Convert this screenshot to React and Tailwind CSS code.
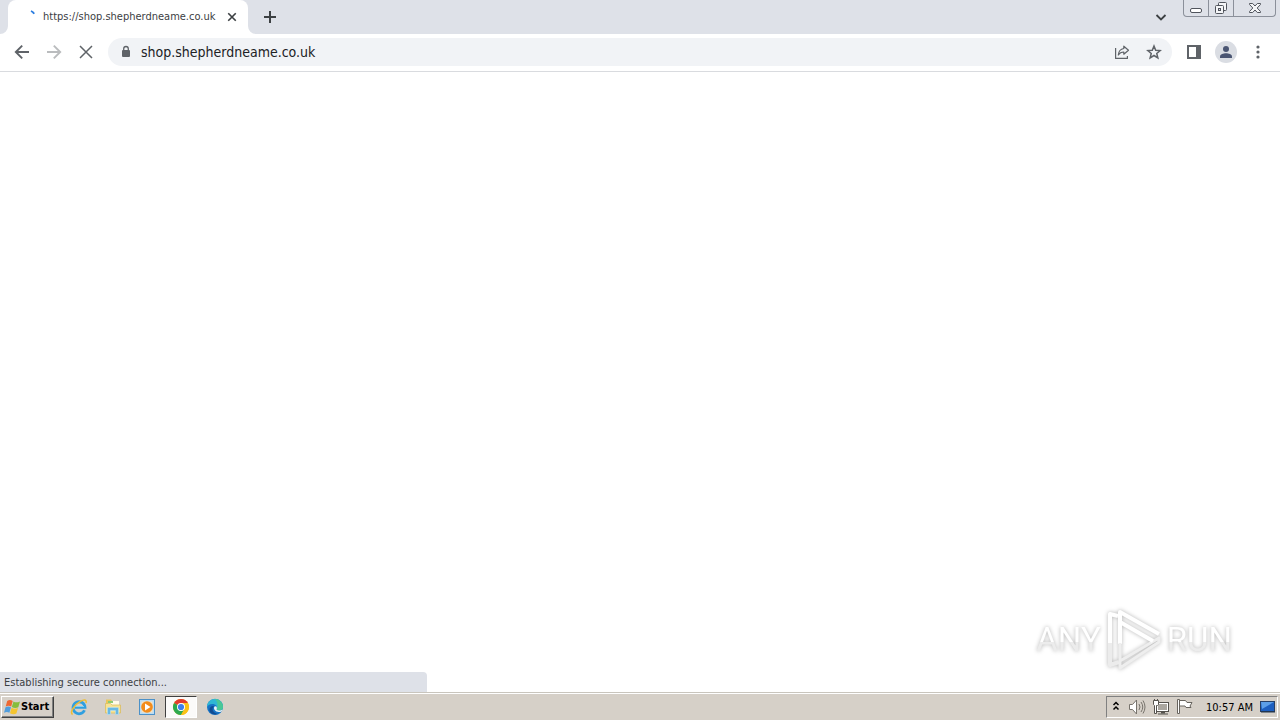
import { useState } from "react";

const UI_FONT = "font-['DejaVu_Sans_Condensed','DejaVu_Sans',sans-serif]";

function Spinner() {
  return (
    <svg width="16" height="16" viewBox="0 0 16 16" fill="none" aria-hidden="true">
      <path d="M6 2a7 7 0 0 1 3.200 2.800" stroke="#2b7de0" strokeWidth="1.900" />
    </svg>
  );
}

function CloseIcon({ size = 16, strokeWidth = 1.5 }) {
  return (
    <svg width={size} height={size} viewBox="0 0 16 16" fill="none" stroke="currentColor" strokeWidth={strokeWidth} aria-hidden="true">
      <path d="M2 2l12 12M14 2L2 14" />
    </svg>
  );
}

function ArrowIcon({ flip }) {
  return (
    <svg className={flip ? "rotate-180" : ""} width="16" height="16" viewBox="0 0 16 16" fill="none" stroke="currentColor" strokeWidth="1.9" aria-hidden="true">
      <path d="M15 8H2M8.2 1.6L1.8 8l6.4 6.4" />
    </svg>
  );
}

function WindowButtons() {
  return (
    <div className="mr-1 flex h-[17px] overflow-hidden rounded-b border border-t-0 border-[#8b909a] text-[#50545c]">
      <button aria-label="Minimize" className="flex w-[25px] items-center justify-center border-r border-[#8b909a]">
        <svg width="14" height="16" viewBox="0 0 14 16" fill="#fff" stroke="currentColor" aria-hidden="true">
          <rect x="1.5" y="8.5" width="11" height="4" rx="1.5" />
        </svg>
      </button>
      <button aria-label="Restore" className="flex w-[25px] items-center justify-center border-r border-[#8b909a]">
        <svg width="14" height="16" viewBox="0 0 14 16" fill="#f4f5f7" stroke="currentColor" aria-hidden="true">
          <rect x="4.5" y="2.5" width="8" height="8" rx="1" />
          <rect x="1.5" y="5.5" width="8" height="8" rx="1" />
          <rect x="4.5" y="8.5" width="2" height="2" fill="#dee1e8" />
        </svg>
      </button>
      <button aria-label="Close window" className="flex w-[41px] items-center justify-center">
        <svg width="14" height="14" viewBox="0 0 14 14" aria-hidden="true">
          <path d="M1.5 2.5h3.2L7 5l2.3-2.5h3.2v1L9.2 7l3.3 3.5v1H9.3L7 9l-2.3 2.5H1.5v-1L4.8 7 1.5 3.5z" fill="#f4f5f7" stroke="currentColor" />
        </svg>
      </button>
    </div>
  );
}

function TabStrip() {
  return (
    <header className="flex h-[34px] items-start bg-[#dee1e8] pl-2">
      <div className="relative flex h-[34px] w-60 items-center rounded-t-lg bg-white pl-[17px] pr-2 text-[#3c4043]">
        <svg className="absolute bottom-0 -left-2" width="8" height="8" viewBox="0 0 8 8" fill="#fff" aria-hidden="true">
          <path d="M8 0v8H0a8 8 0 0 0 8-8z" />
        </svg>
        <svg className="absolute -right-2 bottom-0" width="8" height="8" viewBox="0 0 8 8" fill="#fff" aria-hidden="true">
          <path d="M0 0v8h8a8 8 0 0 1-8-8z" />
        </svg>
        <Spinner />
        <span className="ml-0.5 flex-1 whitespace-nowrap text-[11px] leading-4">https://shop.shepherdneame.co.uk</span>
        <button aria-label="Close tab" className="flex size-4 items-center justify-center">
          <CloseIcon size={10} strokeWidth={2.6} />
        </button>
      </div>
      <button aria-label="New tab" className="ml-[14px] flex h-[34px] w-4 items-center justify-center text-[#3c4043]">
        <svg width="14" height="14" viewBox="0 0 14 14" stroke="currentColor" strokeWidth="2" aria-hidden="true">
          <path d="M7 1v12M1 7h12" />
        </svg>
      </button>
      <div className="flex-1" />
      <button aria-label="Search tabs" className="mr-[14px] flex h-[34px] w-4 items-center justify-center text-[#3c4043]">
        <svg width="12" height="12" viewBox="0 0 12 12" fill="none" stroke="currentColor" strokeWidth="1.8" aria-hidden="true">
          <path d="M1.5 4L6 8.5 10.5 4" />
        </svg>
      </button>
      <WindowButtons />
    </header>
  );
}

function Toolbar() {
  const [url, setUrl] = useState("shop.shepherdneame.co.uk");

  return (
    <nav className="flex h-[38px] items-center border-b border-[#d9dbdf] bg-white px-[14px] pb-px text-[#5f6368]">
      <div className="flex gap-4">
        <button aria-label="Back"><ArrowIcon /></button>
        <button aria-label="Forward" className="text-[#babcbe]"><ArrowIcon flip /></button>
        <button aria-label="Stop"><CloseIcon /></button>
      </div>
      <div className="ml-[14px] flex h-7 flex-1 items-center rounded-full bg-[#f1f3f6] pl-3 pr-[10px]">
        <svg width="12" height="14" viewBox="0 0 12 14" fill="none" aria-hidden="true">
          <rect x="2" y="5" width="8" height="7" rx="1" fill="#5f6368" />
          <path d="M3.7 6V3.8a2.3 2.3 0 0 1 4.6 0V6" stroke="#5f6368" strokeWidth="1.3" />
        </svg>
        <input
          aria-label="Address"
          className="ml-[9px] min-w-0 flex-1 bg-transparent text-sm text-[#202124] outline-none"
          value={url}
          onChange={(e) => setUrl(e.target.value)}
        />
        <button aria-label="Share" className="mr-4">
          <svg width="16" height="16" viewBox="0 0 16 16" fill="none" stroke="currentColor" strokeWidth="1.2" strokeLinejoin="round" aria-hidden="true">
            <path d="M1.6 4v10.4h11.8V12" />
            <path d="M9.8 2.2L14.5 6.2l-4.7 4V8C7.5 8 5.6 8.9 4.3 11c.3-3.6 2.2-6 5.5-6.500z" />
          </svg>
        </button>
        <button aria-label="Bookmark">
          <svg width="16" height="16" viewBox="0 0 16 16" fill="none" stroke="currentColor" strokeWidth="1.5" aria-hidden="true">
            <path d="M8 2l1.7 4.2 4.5.35-3.45 2.9 1.1 4.4L8 11.5l-3.85 2.35 1.1-4.4L1.8 6.55l4.5-.35z" />
          </svg>
        </button>
      </div>
      <div className="ml-[14px] flex items-center gap-[13px]">
        <button aria-label="Side panel">
          <svg width="16" height="16" viewBox="0 0 16 16" fill="currentColor" aria-hidden="true">
            <path fillRule="evenodd" d="M1 1h14v14H1zM3 3v10h7V3z" />
          </svg>
        </button>
        <button aria-label="Profile" className="flex size-[22px] items-center justify-center rounded-full bg-[#dadde3] text-[#4a5572]">
          <svg width="14" height="14" viewBox="0 0 14 14" fill="currentColor" aria-hidden="true">
            <circle cx="7" cy="4" r="3" />
            <path d="M1 13v-1.5C1 9.300 4.500 8.200 7 8.200s6 1.100 6 3.300V13z" />
          </svg>
        </button>
        <button aria-label="Menu">
          <svg width="16" height="16" viewBox="0 0 16 16" fill="currentColor" aria-hidden="true">
            <circle cx="8" cy="3" r="1.6" />
            <circle cx="8" cy="8" r="1.6" />
            <circle cx="8" cy="13" r="1.6" />
          </svg>
        </button>
      </div>
    </nav>
  );
}

function Watermark() {
  const word = "bg-linear-to-b from-white from-55% to-[#ececec] to-55% bg-clip-text font-[Roboto,sans-serif] text-[33px] leading-10 text-transparent";
  return (
    <div className="absolute right-12 bottom-5 flex items-center gap-1 drop-shadow-[0_0_2px_#b4b4b4]">
      <span className={word}>ANY</span>
      <svg width="58" height="64" viewBox="0 0 58 64" fill="none" strokeLinejoin="round" aria-hidden="true">
        <path d="M13 8L5 6v30" stroke="#fff" strokeWidth="4" />
        <path d="M5 35v22l9-3" stroke="#ececec" strokeWidth="4" />
        <path d="M15 36V4l39 22" stroke="#fff" strokeWidth="4" />
        <path d="M15 35v18l39-23v4L15 60v-7" stroke="#eee" strokeWidth="3" />
        <path d="M15 14l33 19" stroke="#fff" strokeWidth="4" />
      </svg>
      <span className={word}>RUN</span>
    </div>
  );
}

function IeIcon() {
  return (
    <svg width="18" height="18" viewBox="0 0 18 18" fill="none" aria-hidden="true">
      <path d="M14.5 12.200A6 6 0 1 1 15 9.300H5" stroke="#2f9fe0" strokeWidth="2.8" />
      <path d="M5 8.500h9" stroke="#7fd0f5" strokeWidth="1" />
      <path d="M2.600 16.500C-.5 14.500 4 7 10 3.600c4-2.300 7-2.200 6 1.400" stroke="#edbd35" strokeWidth="1.5" />
    </svg>
  );
}

function FolderIcon() {
  return (
    <svg width="18" height="18" viewBox="0 0 18 18" aria-hidden="true">
      <path d="M2 1.500h5l1 1.500h7v10H2z" fill="#e9c75a" />
      <path d="M4 3h11v5H4z" fill="#fffbe8" />
      <path d="M4 3h5v2H4z" fill="#8ccb72" />
      <path d="M1.500 5.500h5l1.500 1.500h8.500v8h-15z" fill="#f7e394" stroke="#d9b957" strokeWidth=".7" />
      <path d="M3.500 16.500v-6q0-1 1-1h9q1 0 1 1v6h-3v-4h-5v4z" fill="#68b8e4" stroke="#b7e2f5" strokeWidth=".6" />
    </svg>
  );
}

function MediaIcon() {
  return (
    <svg width="18" height="18" viewBox="0 0 18 18" aria-hidden="true">
      <rect x="1.500" y="1.500" width="15" height="15" fill="#b9dcf4" stroke="#4c91c8" />
      <rect x="3.500" y="3.500" width="11" height="11" fill="#fbe1bc" />
      <circle cx="9" cy="9" r="5.800" fill="#f28c1b" />
      <path d="M7 5.500v7L12.500 9z" fill="#fff" />
    </svg>
  );
}

function ChromeIcon() {
  return (
    <svg width="18" height="18" viewBox="0 0 18 18" aria-hidden="true">
      <circle cx="9" cy="9" r="8" fill="#fbc116" />
      <path d="M9 9L2.070 5A8 8 0 0 1 15.930 5z" fill="#e33b2e" />
      <path d="M9 9L2.070 5A8 8 0 0 0 9 17l3.500-6z" fill="#2da94f" />
      <path d="M9 5h6.930A8 8 0 0 1 9 17l3.460-6z" fill="#fbc116" />
      <circle cx="9" cy="9" r="4" fill="#fff" />
      <circle cx="9" cy="9" r="3.100" fill="#3f7fec" />
    </svg>
  );
}

function EdgeIcon() {
  return (
    <svg width="18" height="18" viewBox="0 0 18 18" aria-hidden="true">
      <circle cx="9" cy="9" r="8" fill="#1673c6" />
      <path d="M1 9a8 8 0 0 1 16-.5c.2 2.500-1.500 4-4 4-2 0-2.800-.8-2.200-1.700C12 8.500 9.500 6 6.500 6 3.500 6 1.500 7.500 1 9z" fill="#2fb7d4" />
      <path d="M9 1a8 8 0 0 1 8 7.500c.2 2.500-1.500 4-4 4-1.500 0-2.500-.5-2.300-1.300C12 8 12 4 9 1z" fill="#4ac796" />
      <path d="M8 8c-3 3-1 7 4 8-5 1.500-9-1-8.500-5C3.800 9 5.500 7.500 8 8z" fill="#104c93" />
      <path d="M8.500 8.500c-1.500 2 .5 5.500 4.500 5.500 1.500 0 2.500-.5 3-1l.7-1.500c-1 .8-2.200 1-3.700 1-2 0-2.800-.8-2.200-1.700.3-1 0-2-.8-2.600z" fill="#eaf4f7" />
    </svg>
  );
}

const APPS = [
  { name: "Internet Explorer", Icon: IeIcon },
  { name: "File Explorer", Icon: FolderIcon },
  { name: "Media Player", Icon: MediaIcon },
  { name: "Chrome", Icon: ChromeIcon, active: true },
  { name: "Edge", Icon: EdgeIcon },
];

function Tray() {
  return (
    <div className="flex h-[22px] items-center border border-t-[#808080] border-r-white border-b-white border-l-[#808080] pl-1">
      <button aria-label="Show hidden icons" className="mr-[7px]">
        <svg width="10" height="12" viewBox="0 0 10 12" fill="none" stroke="#000" strokeWidth="1.500" aria-hidden="true">
          <path d="M2.500 4L5 1.500 7.500 4M2.500 8.500L5 6 7.500 8.500" />
        </svg>
      </button>
      <div className="flex gap-[6px]">
        <svg width="18" height="18" viewBox="0 0 18 18" fill="#fff" stroke="#77736c" aria-hidden="true">
          <path d="M1.500 6.500h3l4-4.500v14l-4-4.500h-3z" />
          <path d="M11 6q2 3 0 6M13 4q3.500 5 0 10M15 2.500q4 6.500 0 13" fill="none" />
        </svg>
        <svg width="18" height="18" viewBox="0 0 18 18" fill="none" aria-hidden="true">
          <rect x="4.500" y="4.500" width="12" height="9" fill="#fff" stroke="#55524d" />
          <rect x="6" y="6" width="9" height="6" fill="#aaa69f" />
          <path d="M6 16h10" stroke="#55524d" />
          <path d="M9 14.500h4" stroke="#55524d" strokeWidth="2" />
          <path d="M1.500 2.500h5v4l-1 1H4.500v8h-2v-8l-1-1zM2.500 2.500V1M5.500 2.500V1" fill="#fff" stroke="#55524d" />
        </svg>
        <svg width="18" height="18" viewBox="0 0 18 18" fill="#fff" stroke="#68645e" aria-hidden="true">
          <path d="M3.500 2.500h6l1.500 2h5l-2 3.500 1 1.500h-5l-1-1.500H3.500z" />
          <path d="M1.500 1.500h2v14h-2z" />
        </svg>
      </div>
      <time className="ml-3 w-[49px] pt-0.5 whitespace-nowrap text-[11px] leading-4 text-black">10:57 AM</time>
      <button aria-label="Show desktop" className="ml-1">
        <svg width="18" height="16" viewBox="0 0 18 16" aria-hidden="true">
          <rect x="1.500" y="2.500" width="14" height="10" fill="#1d5fc0" stroke="#263f66" />
          <path d="M2 3h13L3 10z" fill="#5c9fe8" />
          <path d="M2 12h14v1.500H2z" fill="#23364f" />
        </svg>
      </button>
    </div>
  );
}

function Taskbar() {
  return (
    <footer className="flex h-7 items-center border-t border-[#c9c5bd] bg-[#d6d0c8] pr-0.5 pl-px shadow-[inset_0_1px_0_#fff]">
      <button className="mt-px flex h-[22px] items-center border border-t-white border-r-[#404040] border-b-[#404040] border-l-white pr-1 pl-0.5 text-[11px] font-bold text-black shadow-[inset_-1px_-1px_0_#808080]">
        <svg width="17" height="16" viewBox="0 0 17 16" aria-hidden="true">
          <path d="M3.200 2q2.700-1.800 5.500 0L7.200 7.500q-2.700-1.500-5.500 0z" fill="#ee6832" />
          <path d="M9.500 2.500q2.500 1.700 6.500 0L14.300 8.300q-3.300 1.500-6.500-.3z" fill="#86bd3d" />
          <path d="M1.500 8.300q2.700-1.500 5.500 0l-1.600 5.500q-2.500-1.500-5.400 0z" fill="#519ddc" />
          <path d="M7.600 8.800q2.900 1.700 6.400.2l-1.600 5.500q-3 1.400-6.400-.3z" fill="#f5c52f" />
        </svg>
        Start
      </button>
      <div className="mt-px ml-[9px] flex gap-0.5">
        {APPS.map(({ name, Icon, active }) => (
          <button
            key={name}
            aria-label={name}
            className={`flex h-[22px] w-8 items-center justify-center border ${active ? "border-t-[#404040] border-r-white border-b-white border-l-[#404040] bg-[#fbfaf9]" : "border-transparent"}`}
          >
            <Icon />
          </button>
        ))}
      </div>
      <div className="flex-1" />
      <Tray />
    </footer>
  );
}

export default function App() {
  return (
    <div className={`flex h-screen flex-col bg-white ${UI_FONT}`}>
      <TabStrip />
      <Toolbar />
      <main className="relative flex-1">
        <Watermark />
        <div role="status" className="absolute bottom-0 left-0 w-1/3 rounded-tr bg-[#dee1e8] px-1 pt-0.5 text-[11px] leading-[18px] text-[#3c4043]">
          Establishing secure connection...
        </div>
      </main>
      <Taskbar />
    </div>
  );
}
